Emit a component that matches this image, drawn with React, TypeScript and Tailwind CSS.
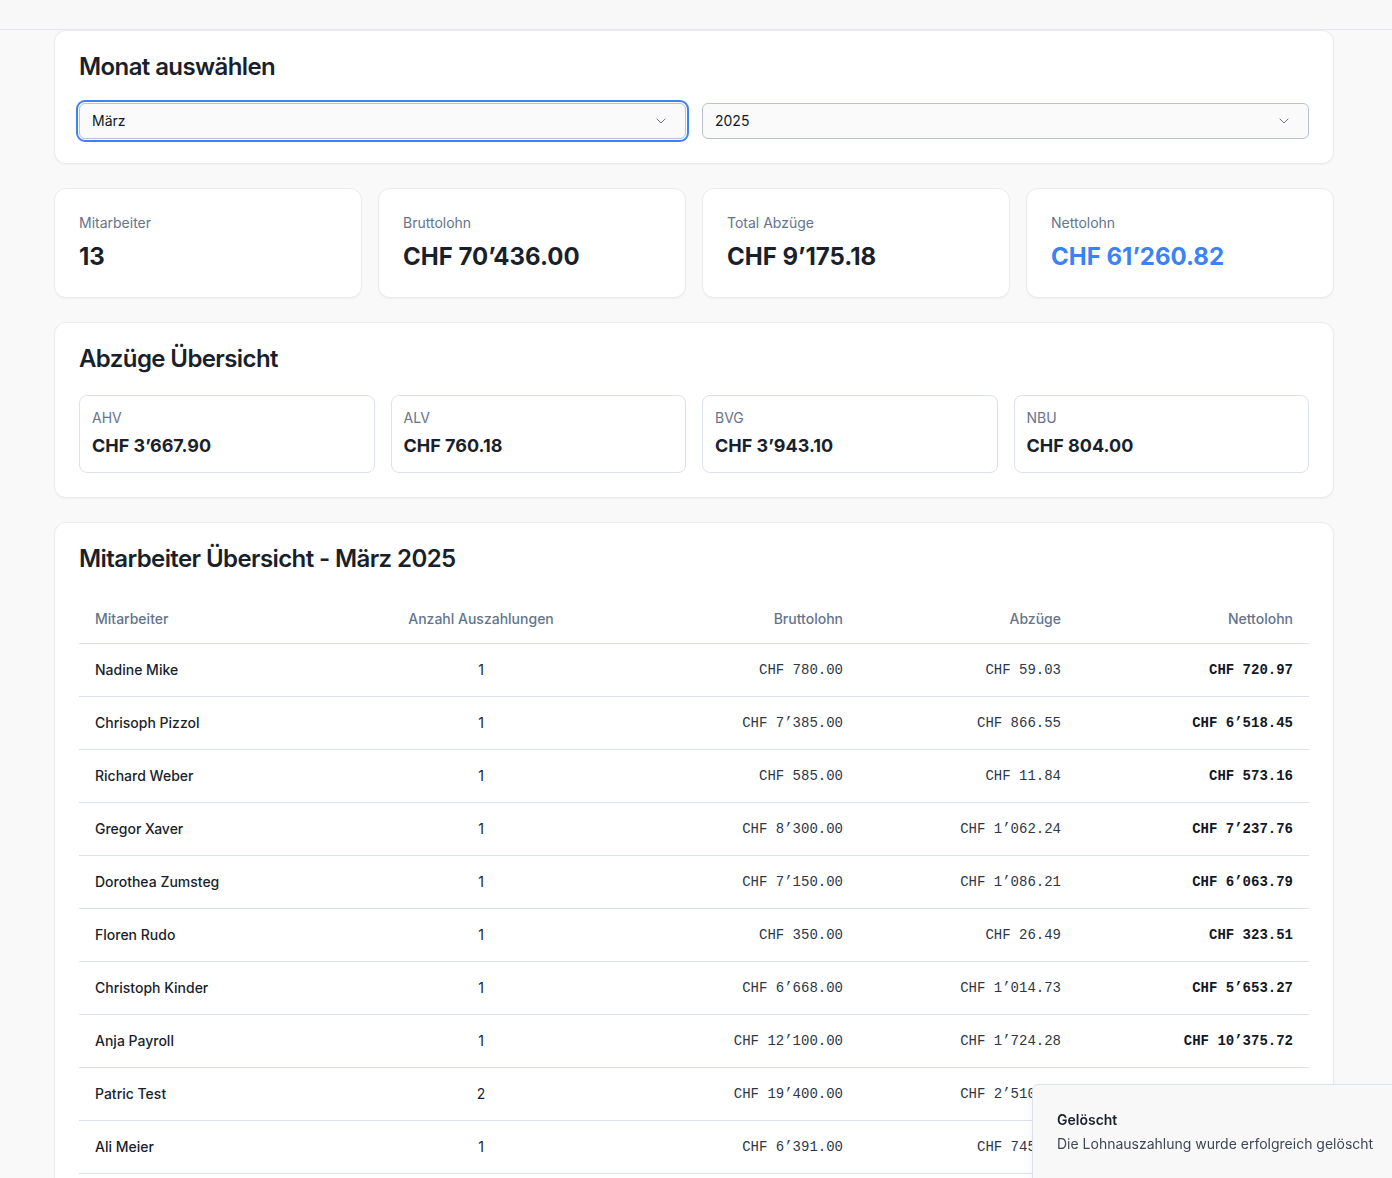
import * as React from "react";
import { ChevronDown } from "lucide-react";

const stats = [
  { label: "Mitarbeiter", value: "13", accent: false },
  { label: "Bruttolohn", value: "CHF 70’436.00", accent: false },
  { label: "Total Abzüge", value: "CHF 9’175.18", accent: false },
  { label: "Nettolohn", value: "CHF 61’260.82", accent: true },
];

const deductions = [
  { label: "AHV", value: "CHF 3’667.90" },
  { label: "ALV", value: "CHF 760.18" },
  { label: "BVG", value: "CHF 3’943.10" },
  { label: "NBU", value: "CHF 804.00" },
];

const rows = [
  ["Nadine Mike", "1", "CHF 780.00", "CHF 59.03", "CHF 720.97"],
  ["Chrisoph Pizzol", "1", "CHF 7’385.00", "CHF 866.55", "CHF 6’518.45"],
  ["Richard Weber", "1", "CHF 585.00", "CHF 11.84", "CHF 573.16"],
  ["Gregor Xaver", "1", "CHF 8’300.00", "CHF 1’062.24", "CHF 7’237.76"],
  ["Dorothea Zumsteg", "1", "CHF 7’150.00", "CHF 1’086.21", "CHF 6’063.79"],
  ["Floren Rudo", "1", "CHF 350.00", "CHF 26.49", "CHF 323.51"],
  ["Christoph Kinder", "1", "CHF 6’668.00", "CHF 1’014.73", "CHF 5’653.27"],
  ["Anja Payroll", "1", "CHF 12’100.00", "CHF 1’724.28", "CHF 10’375.72"],
  ["Patric Test", "2", "CHF 19’400.00", "CHF 2’510.00", "CHF 16’890.00"],
  ["Ali Meier", "1", "CHF 6’391.00", "CHF 745.00", "CHF 5’646.00"],
];

function Card({ children, className = "" }: { children: React.ReactNode; className?: string }) {
  return (
    <div className={"rounded-xl border border-[#ebebeb] bg-white shadow-[0_1px_2px_rgba(0,0,0,0.04)] " + className}>
      {children}
    </div>
  );
}

function SelectBox({ value, focused }: { value: string; focused?: boolean }) {
  return (
    <div
      className={
        "flex h-9 flex-1 items-center justify-between rounded-md border border-[#b8c2d3] bg-[#fafafa] pl-3 pr-4 text-sm text-[#111827] " +
        (focused ? "outline-2 outline-offset-1 outline-[#3b82f6]" : "")
      }
    >
      <span>{value}</span>
      <ChevronDown className="h-4 w-4 text-[#6b7280]" strokeWidth={1.5} />
    </div>
  );
}

export default function App() {
  return (
    <div className="min-h-[1178px] bg-[#f9f9f9] font-['Inter','Noto_Sans',sans-serif] text-[#0f172a]">
      <div className="h-[30px] border-b border-[#e3e6ee] bg-[#f8f8f8]" />
      <main className="flex w-[1334px] flex-col gap-6 pl-[54px]">
        <Card>
          <div className="p-6">
            <h2 className="text-2xl leading-none font-semibold tracking-tight text-[#1a1f2c]">Monat auswählen</h2>
          </div>
          <div className="flex gap-4 px-6 pb-6">
            <SelectBox value="März" focused />
            <SelectBox value="2025" />
          </div>
        </Card>

        <div className="grid grid-cols-4 gap-4">
          {stats.map((s) => (
            <Card key={s.label}>
              <div className="px-6 pt-6 pb-2 text-sm text-[#64748b]">{s.label}</div>
              <div
                className={
                  "px-6 pb-6 text-2xl font-bold " + (s.accent ? "text-[#3b82f6]" : "text-[#1a1f2c]")
                }
              >
                {s.value}
              </div>
            </Card>
          ))}
        </div>

        <Card>
          <div className="p-6">
            <h2 className="text-2xl leading-none font-semibold tracking-tight text-[#1a1f2c]">Abzüge Übersicht</h2>
          </div>
          <div className="grid grid-cols-4 gap-4 px-6 pb-6">
            {deductions.map((d) => (
              <div key={d.label} className="rounded-lg border border-[#dde2ea] p-3">
                <div className="text-sm text-[#64748b]">{d.label}</div>
                <div className="mt-1 text-lg font-bold text-[#1a1f2c]">{d.value}</div>
              </div>
            ))}
          </div>
        </Card>

        <Card>
          <div className="p-6">
            <h2 className="text-2xl leading-none font-semibold tracking-tight text-[#1a1f2c]">
              Mitarbeiter Übersicht - März 2025
            </h2>
          </div>
          <div className="px-6 pb-6">
            <table className="w-full table-fixed border-collapse text-sm">
              <colgroup>
                <col className="w-[243px]" />
                <col className="w-[318px]" />
                <col className="w-[219px]" />
                <col className="w-[218px]" />
                <col />
              </colgroup>
              <thead>
                <tr className="h-12 border-b border-[#dde2ea] text-[#64748b]">
                  <th className="px-4 text-left font-medium">Mitarbeiter</th>
                  <th className="px-4 text-center font-medium">Anzahl Auszahlungen</th>
                  <th className="px-4 text-right font-medium">Bruttolohn</th>
                  <th className="px-4 text-right font-medium">Abzüge</th>
                  <th className="px-4 text-right font-medium">Nettolohn</th>
                </tr>
              </thead>
              <tbody>
                {rows.map((r) => (
                  <tr key={r[0]} className="border-b border-[#dde2ea]">
                    <td className="p-4 font-medium text-[#1a1f2c]">{r[0]}</td>
                    <td className="p-4 text-center text-[#1a1f2c]">{r[1]}</td>
                    <td className="p-4 text-right font-mono text-[#2d3748]">{r[2]}</td>
                    <td className="p-4 text-right font-mono text-[#2d3748]">{r[3]}</td>
                    <td className="p-4 text-right font-mono font-semibold text-[#111827]">{r[4]}</td>
                  </tr>
                ))}
              </tbody>
            </table>
          </div>
        </Card>
      </main>

      <div className="fixed top-[1084px] left-[1032px] h-[130px] w-[400px] rounded-md border border-[#dde2ea] bg-[#f8f8f8] px-6 pt-[25px] shadow-[0_4px_12px_rgba(0,0,0,0.05)]">
        <div className="text-sm font-semibold text-[#1a1f2c]">Gelöscht</div>
        <div className="mt-1 text-sm text-[#3f4654]">Die Lohnauszahlung wurde erfolgreich gelöscht</div>
      </div>
    </div>
  );
}
